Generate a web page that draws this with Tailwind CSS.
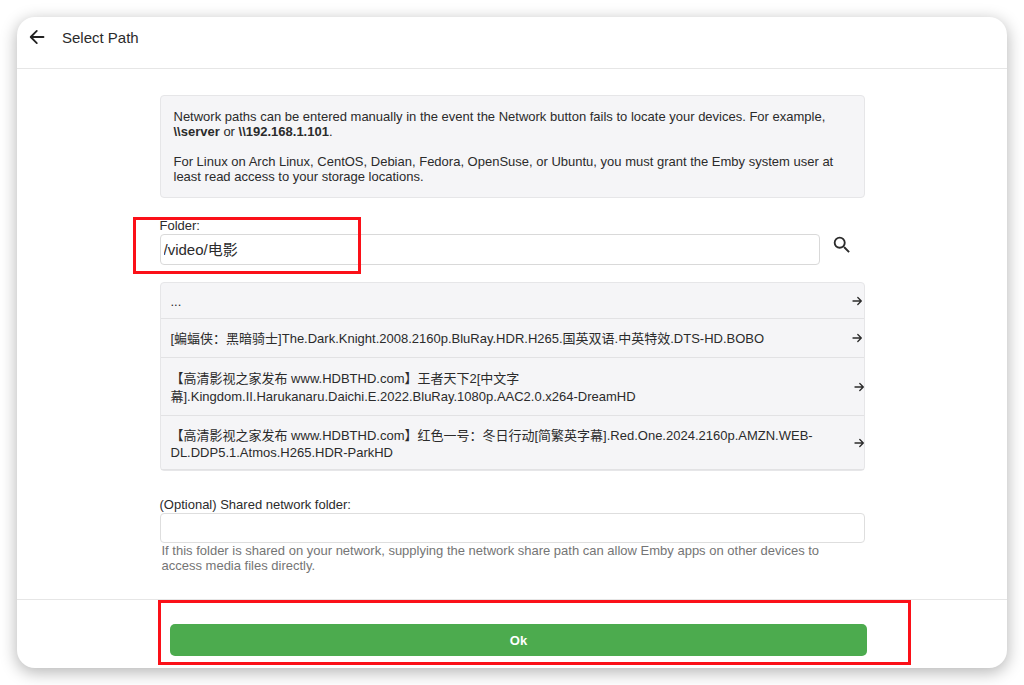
<!DOCTYPE html>
<html lang="en">
<head>
    <meta charset="UTF-8">
    <meta name="viewport" content="width=device-width, initial-scale=1.0">
    <title>Select Path</title>
    <script src="https://cdn.jsdelivr.net/npm/@tailwindcss/browser@4"></script>
</head>
<body class="bg-white min-h-screen p-[17px] font-['Liberation_Sans','Noto_Sans_CJK_SC',sans-serif] text-[13px] leading-[15px] text-[#2b2b2b]">
    <div class="bg-white rounded-[18px] shadow-[0_4px_16px_1px_rgba(0,0,0,0.28)]">
        <!-- Header -->
        <header class="flex items-start h-[52px] pt-[10px] pl-[10px] border-b border-[#e6e6e6]">
            <button type="button" aria-label="Back" class="w-5 h-5">
                <svg class="w-5 h-5" viewBox="0 0 20 20" fill="none" stroke="#222" stroke-width="1.8" stroke-linecap="round" stroke-linejoin="round">
                    <path d="M16.500 10H4M9.800 3.900L3.700 10l6.100 6.100"/>
                </svg>
            </button>
            <h1 class="ml-[15px] text-[15px] leading-[22px]">Select Path</h1>
        </header>

        <!-- Content -->
        <main class="max-w-[705px] mx-auto pt-[26px] pb-[25px]">
            <div class="p-[13px] bg-[#f5f5f7] border border-[#e6e6e8] rounded-sm">
                <p>Network paths can be entered manually in the event the Network button fails to locate your devices. For example, <b>\\server</b> or <b>\\192.168.1.101</b>.</p>
                <p class="mt-[15px]">For Linux on Arch Linux, CentOS, Debian, Fedora, OpenSuse, or Ubuntu, you must grant the Emby system user at least read access to your storage locations.</p>
            </div>

            <!-- Folder -->
            <div class="relative mt-5">
                <label for="folder" class="block">Folder:</label>
                <div class="flex mt-px">
                    <input type="text" id="folder" value="/video/电影" class="grow h-[31px] px-[3px] pb-[3px] text-[15px] bg-white border border-[#d9d9d9] rounded-sm">
                    <button type="button" aria-label="Search" class="w-[45px] h-[22px] pl-[11px]">
                        <svg class="w-[22px] h-[22px]" viewBox="0 0 24 24" fill="#2b2b2b">
                            <path d="M15.500 14h-.79l-.28-.27A6.471 6.471 0 0 0 16 9.500 6.500 6.500 0 1 0 9.500 16c1.610 0 3.090-.59 4.230-1.570l.27.28v.79l5 4.990L20.490 19l-4.990-5zm-6 0C7.010 14 5 11.990 5 9.500S7.010 5 9.500 5 14 7.010 14 9.500 11.990 14 9.500 14z"/>
                        </svg>
                    </button>
                </div>
                <div class="absolute -top-px -left-[27px] w-[228px] h-[57px] border-3 border-[#fb1018] pointer-events-none"></div>
            </div>

            <!-- Folder list -->
            <ul class="mt-[17px] bg-[#f5f5f7] border border-[#e6e6e8] rounded-sm leading-[18px]">
                <li class="border-b border-[#e2e2e4]">
                    <button type="button" class="flex items-center justify-between w-full h-[35px] pl-[10px] pr-px text-left">
                        <span class="pt-[2px]">...</span>
                        <svg class="w-3 h-3 shrink-0" viewBox="0 0 12 12" fill="none" stroke="#2b2b2b" stroke-width="1.3" stroke-linecap="round" stroke-linejoin="round"><path d="M2 6h8M6.800 2.500L10.300 6 6.800 9.500"/></svg>
                    </button>
                </li>
                <li class="border-b border-[#e2e2e4]">
                    <button type="button" class="flex items-center justify-between w-full h-[38px] pl-[10px] pr-px text-left">
                        <span class="pt-[2px]">[蝙蝠侠：黑暗骑士]The.Dark.Knight.2008.2160p.BluRay.HDR.H265.国英双语.中英特效.DTS-HD.BOBO</span>
                        <svg class="w-3 h-3 shrink-0" viewBox="0 0 12 12" fill="none" stroke="#2b2b2b" stroke-width="1.3" stroke-linecap="round" stroke-linejoin="round"><path d="M2 6h8M6.800 2.500L10.300 6 6.800 9.500"/></svg>
                    </button>
                </li>
                <li class="border-b border-[#e2e2e4]">
                    <button type="button" class="flex items-center justify-between w-full h-[57px] pl-[10px] text-left">
                        <span class="pt-[2px]">【高清影视之家发布 www.HDBTHD.com】王者天下2[中文字<br>幕].Kingdom.II.Harukanaru.Daichi.E.2022.BluRay.1080p.AAC2.0.x264-DreamHD</span>
                        <svg class="w-[10px] h-3 shrink-0" viewBox="0 0 10 12" fill="none" stroke="#2b2b2b" stroke-width="1.3" stroke-linecap="round" stroke-linejoin="round"><path d="M1 6h8M5.800 2.500L9.300 6 5.800 9.500"/></svg>
                    </button>
                </li>
                <li class="border-b border-[#e2e2e4]">
                    <button type="button" class="flex items-center justify-between w-full h-[53px] pl-[10px] text-left leading-[17px]">
                        <span class="pt-[2px]">【高清影视之家发布 www.HDBTHD.com】红色一号：冬日行动[简繁英字幕].Red.One.2024.2160p.AMZN.WEB-<br>DL.DDP5.1.Atmos.H265.HDR-ParkHD</span>
                        <svg class="w-[10px] h-3 shrink-0" viewBox="0 0 10 12" fill="none" stroke="#2b2b2b" stroke-width="1.3" stroke-linecap="round" stroke-linejoin="round"><path d="M1 6h8M5.800 2.500L9.300 6 5.800 9.500"/></svg>
                    </button>
                </li>
            </ul>

            <!-- Shared network folder -->
            <div class="mt-[26px]">
                <label for="sharedFolder" class="block">(Optional) Shared network folder:</label>
                <input type="text" id="sharedFolder" class="block w-full h-[30px] mt-px px-[3px] text-[15px] bg-white border border-[#dedede] rounded-sm">
                <p class="pl-[2px] pr-5 pb-px text-[#757575]">If this folder is shared on your network, supplying the network share path can allow Emby apps on other devices to access media files directly.</p>
            </div>
        </main>

        <!-- Footer -->
        <footer class="pt-6 pb-3 pl-[13px] border-t border-[#e6e6e6]">
            <div class="relative max-w-[697px] mx-auto">
                <button type="button" class="block w-full h-8 bg-[#4cab4e] rounded-[5px] text-white font-bold">Ok</button>
                <div class="absolute -top-6 -left-3 -right-[44px] h-[65px] border-3 border-[#fb1018] pointer-events-none"></div>
            </div>
        </footer>
    </div>
</body>
</html>
